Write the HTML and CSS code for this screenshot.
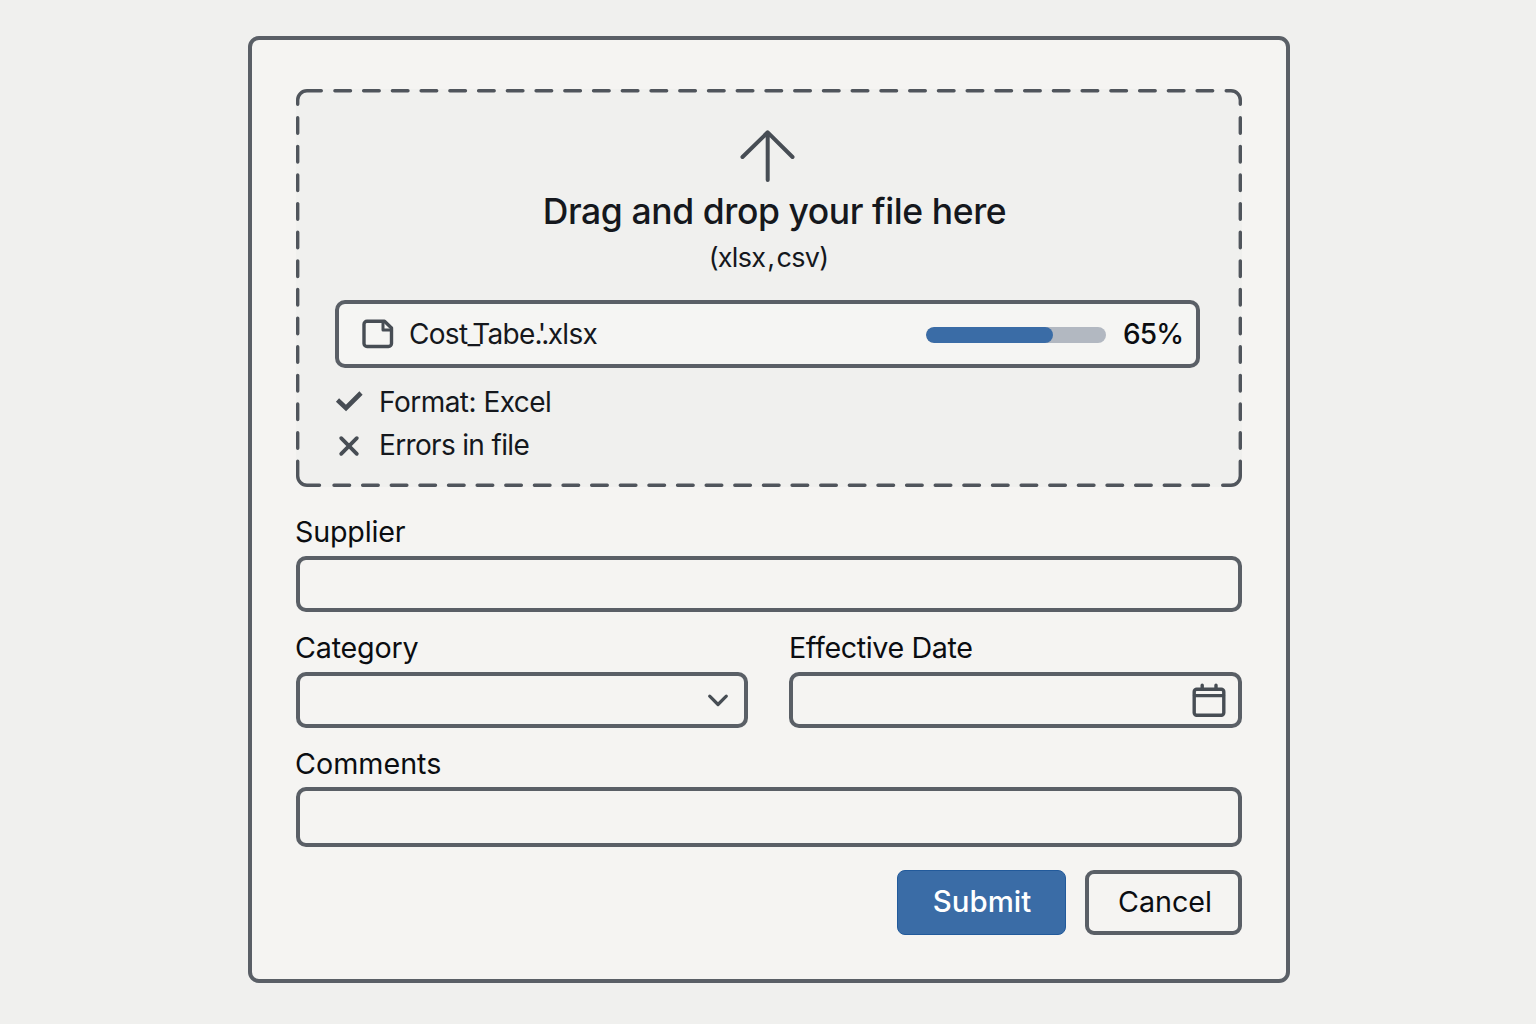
FILE: index.html
```html
<!DOCTYPE html>
<html lang="en">
<head>
<meta charset="utf-8">
<title>Upload cost table</title>
<link rel="stylesheet" href="styles.css">
</head>
<body>
<form class="card">
  <section class="dropzone">
    <svg class="dashes" viewBox="0 0 946 398" fill="none">
      <path d="M1.7 15.3V11A9.3 9.3 0 0 1 11 1.7H25.3M930.2 1.7H935A9.3 9.3 0 0 1 944.3 11V15.3M944.3 372.2V387A9.3 9.3 0 0 1 935 396.3H926.7M23.5 396.3H11A9.3 9.3 0 0 1 1.7 387V372.2"/>
      <path class="dashed-top" d="M38.9 1.7H917"/>
      <path class="dashed" d="M38 396.3H914M1.7 28.7V362M944.3 28.7V362"/>
    </svg>
    <svg class="arrow" width="64" height="56" viewBox="0 0 64 56" fill="none"><path d="M6.5 29L31.7 4.3L56.5 29M31.7 5V52"/></svg>
    <h1 class="title">Drag and drop your file here</h1>
    <p class="types">(xlsx<span class="comma">,</span>csv)</p>
    <div class="file">
      <svg class="file-icon" width="32" height="30" viewBox="0 0 32 30" fill="none"><path d="M5 2.2H22.5L29.5 9V24.5A3 3 0 0 1 26.5 27.5H5A3 3 0 0 1 2 24.5V5.2A3 3 0 0 1 5 2.2Z"/><path class="fold" d="M21 3V11H29"/></svg>
      <span class="file-name">Cost<span class="underscore">_</span>Tabe<span class="marks">.'.</span>xlsx</span>
      <div class="progress"><div class="progress-fill" style="width:70.3%"></div></div>
      <span class="percent">65%</span>
    </div>
    <ul class="checks">
      <li><svg width="28" height="24" viewBox="0 0 28 24" fill="none"><path class="tick" d="M2.5 11L11 19L26 4"/></svg><span class="format">Format: Excel</span></li>
      <li><svg width="28" height="24" viewBox="0 0 28 24" fill="none"><path class="cross" d="M6.2 5.2L21.8 20.8M21.8 5.2L6.2 20.8"/></svg><span class="errors">Errors in file</span></li>
    </ul>
  </section>
  <div class="field supplier"><label>Supplier</label><div class="input"></div></div>
  <div class="row">
    <div class="field category"><label>Category</label><div class="input"><svg class="chevron" width="24" height="16" viewBox="0 0 24 16" fill="none"><path d="M3.7 4.2L12 12.5L20.3 4.2"/></svg></div></div>
    <div class="field date"><label>Effective Date</label><div class="input"><svg class="calendar" width="34" height="36" viewBox="0 0 34 36" fill="none"><rect x="2.2" y="7.2" width="29.6" height="26" rx="2.5"/><path d="M2.5 13.6H31.5M10.2 3.3V7M24 3.3V7"/></svg></div></div>
  </div>
  <div class="field comments"><label>Comments</label><div class="input"></div></div>
  <div class="actions">
    <button type="button" class="btn primary">Submit</button>
    <button type="button" class="btn cancel">Cancel</button>
  </div>
</form>
</body>
</html>
```
FILE: styles.css
```css
* { box-sizing: border-box; }

body {
  margin: 0;
  min-height: 1024px;
  padding: 36px 0 0 248px;
  background: #f0f0ee;
  color: #15181d;
  font-family: Inter, "Liberation Sans", sans-serif;
}

.card {
  width: 1042px;
  height: 947px;
  padding: 49px 44px 0;
  border: 4px solid #5a5f66;
  border-radius: 11px;
  background: #f5f4f2;
}

svg { display: block; flex: none; stroke: #474d54; stroke-linecap: round; stroke-linejoin: round; }

.dropzone {
  position: relative;
  height: 398px;
  padding: 39px 42px 0 39px;
  border-radius: 11px;
  background: #f0f0ee;
}

.dashes { position: absolute; inset: 0; width: 946px; height: 398px; stroke: #50555c; stroke-width: 3.4; }
.dashed { stroke-dasharray: 15.6 13.03; }
.dashed-top { stroke-dasharray: 15.6 13.14; }

.arrow { margin: 0 auto; stroke-width: 4; }

.title { margin: 6px 0 0; padding-left: 14px; font-size: 35.5px; font-weight: 500; line-height: 44px; letter-spacing: -0.42px; text-align: center; white-space: nowrap; }
.types { margin: 7px 0 0; padding-left: 2px; font-size: 27px; line-height: 34px; letter-spacing: -0.7px; text-align: center; }
.comma { padding: 0 2px; }

.file {
  display: flex;
  align-items: center;
  height: 68px;
  margin-top: 25px;
  padding: 0 14px 0 23px;
  border: 4px solid #5a5f66;
  border-radius: 10px;
  background: #f5f5f3;
}
.file-icon { stroke-width: 3.4; }
.fold { stroke-width: 3; }
.file-name { margin-left: 15px; font-size: 28px; line-height: 36px; letter-spacing: -0.7px; }
.underscore { letter-spacing: -8px; }
.marks { letter-spacing: -2.6px; margin-right: 1px; }
.progress { width: 180px; height: 16px; margin: 1px 0 0 auto; border-radius: 8px; background: #b2b8c1; overflow: hidden; }
.progress-fill { height: 100%; border-radius: 8px; background: #3a6ca6; }
.percent { width: 59px; margin-left: 17px; font-size: 28px; font-weight: 500; line-height: 36px; letter-spacing: -0.9px; color: #0b0d11; }

.checks { display: grid; gap: 7px; margin: 15px 0 0; padding: 0; list-style: none; font-size: 28px; line-height: 36px; }
.checks li { display: flex; align-items: center; gap: 16px; height: 36.5px; }
.format { padding-top: 1px; letter-spacing: -0.52px; }
.errors { letter-spacing: -0.66px; }
.tick { stroke-width: 4.6; stroke-linecap: butt; stroke-linejoin: miter; }
.cross { stroke-width: 3.8; }

.field { display: grid; gap: 6px; margin-top: 18px; }
.field.supplier { margin-top: 27px; }
.field label { margin-left: -1px; font-size: 28.7px; line-height: 36px; letter-spacing: -0.2px; color: #0b0d11; }
.date label { margin-left: 0; letter-spacing: -0.38px; }
.input { display: flex; align-items: center; justify-content: flex-end; height: 56px; border: 4px solid #5a5f66; border-radius: 10px; }
.row { display: grid; grid-template-columns: 452px 453px; gap: 41px; }
.chevron { margin-right: 14px; stroke-width: 3.2; }
.calendar { margin: 0 12px 1px 0; stroke-width: 3.4; }
.comments { gap: 5px; }
.comments label { letter-spacing: 0; }
.comments .input { height: 60px; }

.actions { display: flex; justify-content: flex-end; gap: 19px; margin-top: 23px; }
.btn { width: 157px; height: 65px; padding: 0 0 2px; border: 4px solid #5a5f66; border-radius: 9px; background: transparent; color: #0b0d11; font: 400 28.7px/36px Inter, "Liberation Sans", sans-serif; }
.cancel { padding-left: 3px; }
.primary { width: 169px; padding-left: 1px; border: 1px solid #225a9b; border-radius: 8px; background: #3a6ca6; color: #fff; font-size: 29.4px; font-weight: 500; }
```
